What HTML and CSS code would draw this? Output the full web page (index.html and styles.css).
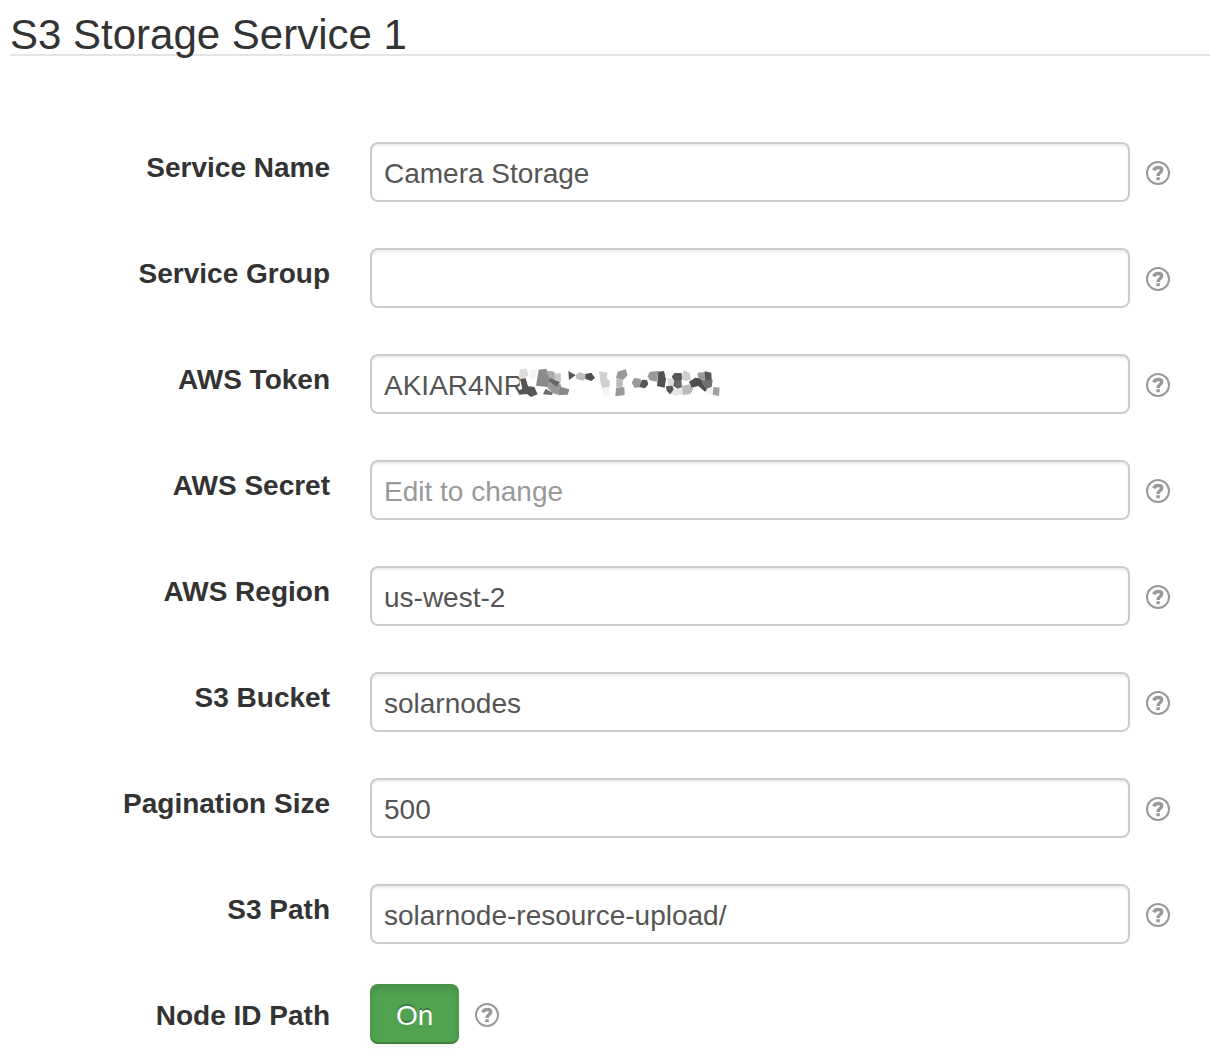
FILE: index.html
```html
<!DOCTYPE html>
<html lang="en">
<head>
<meta charset="utf-8">
<meta name="viewport" content="width=device-width, initial-scale=1">
<title>S3 Storage Service 1</title>
<link rel="stylesheet" href="styles.css">
</head>
<body>
<svg class="sprite" aria-hidden="true">
  <symbol id="help" viewBox="0 0 24 24">
    <circle cx="12" cy="12" r="11" fill="none" stroke="currentColor" stroke-width="2"/>
    <path d="M7.8 9.4C8.5 7.3 10 6.5 12.2 6.5C14.5 6.5 15.7 7.4 15.7 9C15.7 11.6 12.1 11.6 12.1 15" fill="none" stroke="currentColor" stroke-width="3.4"/>
    <path d="M10.3 16.2h3.5v3h-3.5z" fill="currentColor"/>
  </symbol>
</svg>
<form class="settings">
  <h1 class="title">S3 Storage Service 1</h1>
  <div class="row">
    <label class="label" for="name">Service Name</label>
    <div class="controls"><div class="field"><input class="input" id="name" type="text" value="Camera Storage"></div><button class="help" type="button" aria-label="Help"><svg class="icon"><use href="#help"/></svg></button></div>
  </div>
  <div class="row">
    <label class="label" for="group">Service Group</label>
    <div class="controls"><div class="field"><input class="input" id="group" type="text"></div><button class="help" type="button" aria-label="Help"><svg class="icon"><use href="#help"/></svg></button></div>
  </div>
  <div class="row">
    <label class="label" for="token">AWS Token</label>
    <div class="controls">
      <div class="field">
        <input class="input" id="token" type="text" value="AKIAR4NR">
        <svg class="mask" viewBox="0 0 630 135" aria-hidden="true">
          <path fill="#fff" d="M29 26h24v80h-24z"/>
          <path fill="#ddd" d="M30 28l20-2 5 20-14 12-15-5z"/>
          <path fill="#f4f4f4" d="M58 30l24-2-3 25-20 3z"/>
          <path fill="#555" d="M30 57l17-2 7 24 19 2 10 22-20 8-12-9-23 2-3-12 12-6z"/>
          <path fill="#8a8a8a" d="M86 29l23-3 12 32-8 23-35-4z"/>
          <path fill="#aaa" d="M108 32l22 2 8 9-4 20-15-7z"/>
          <path fill="#c6c6c6" d="M132 42l20-3 1 28-16-4z"/>
          <path fill="#999" d="M116 65l25 13 10-8 3 12-6 24-20-7-16-16z"/>
          <path fill="#666" d="M120 54l30 13-9 13-24-15z"/>
          <path fill="#6d6d6d" d="M107 86l22 13-4 6-26-2z"/>
          <path fill="#888" d="M151 80l27 8-5 16-26 1z"/>
          <path fill="#555" d="M175 33l22 13-20 14z"/>
          <path fill="#bbb" d="M197 45l12-8 15 5 2 13-8 7-19-6z"/>
          <path fill="#4d4d4d" d="M226 42l18-4 11 16-11 9-18-6z"/>
          <path fill="#d0d0d0" d="M267 34l26 4-3 17 10 8-1 18-22 3-5-15z"/>
          <path fill="#f3f3f3" d="M275 84l22-3 2 26-17 3z"/>
          <path fill="#999" d="M323 35l24-7 6 18-14 14-21-6z"/>
          <path fill="#bbb" d="M319 55l20 4-2 24-18-2z"/>
          <path fill="#999" d="M318 83l25-2 1 24-28 4z"/>
          <path fill="#999" d="M373 54l17 2 7 11-8 14-15 3-9-16z"/>
          <path fill="#555" d="M396 59l15 1 4 13-10 12-17-4z"/>
          <path fill="#999" d="M419 35l27-2-6 32-21-4-6-12z"/>
          <path fill="#505050" d="M445 35l17-2 6 22-4 28-23-5z"/>
          <path fill="#f1f1f1" d="M469 29l15 17-19 7z"/>
          <path fill="#ccc" d="M522 31l17 8 4 20-16 4-14-6z"/>
          <path fill="#ddd" d="M472 53l21 4 3 22-22-1z"/>
          <path fill="#555" d="M493 39l22 0 1 20-23 3-8-12z"/>
          <path fill="#666" d="M493 60l21 0 2 21-12 7-14-10z"/>
          <path fill="#555" d="M468 79l19-2 6 15-13 11-10-11z"/>
          <path fill="#e5e5e5" d="M494 84l21 2 5 16-25 5-12-8z"/>
          <path fill="#bbb" d="M515 78l22-5 13 14-9 15-22 3z"/>
          <path fill="#4e4e4e" d="M537 65l19-12 21 3 2 17 15 13-9 9-20-17-20 5z"/>
          <path fill="#999" d="M563 38l24-2 2 22-14 3-12-11z"/>
          <path fill="#555" d="M584 34l20 4 1 22-19 2z"/>
          <path fill="#707070" d="M579 60l29-1-3 22-17 7-10-15z"/>
          <path fill="#f2f2f2" d="M590 86l16-4 2 24-18-3z"/>
          <path fill="#a0a0a0" d="M610 81l19 2-2 25-19-4z"/>
        </svg>
      </div><button class="help" type="button" aria-label="Help"><svg class="icon"><use href="#help"/></svg></button>
    </div>
  </div>
  <div class="row">
    <label class="label" for="secret">AWS Secret</label>
    <div class="controls"><div class="field"><input class="input" id="secret" type="password" placeholder="Edit to change"></div><button class="help" type="button" aria-label="Help"><svg class="icon"><use href="#help"/></svg></button></div>
  </div>
  <div class="row">
    <label class="label" for="region">AWS Region</label>
    <div class="controls"><div class="field"><input class="input" id="region" type="text" value="us-west-2"></div><button class="help" type="button" aria-label="Help"><svg class="icon"><use href="#help"/></svg></button></div>
  </div>
  <div class="row">
    <label class="label" for="bucket">S3 Bucket</label>
    <div class="controls"><div class="field"><input class="input" id="bucket" type="text" value="solarnodes"></div><button class="help" type="button" aria-label="Help"><svg class="icon"><use href="#help"/></svg></button></div>
  </div>
  <div class="row">
    <label class="label" for="pagination">Pagination Size</label>
    <div class="controls"><div class="field"><input class="input" id="pagination" type="text" value="500"></div><button class="help" type="button" aria-label="Help"><svg class="icon"><use href="#help"/></svg></button></div>
  </div>
  <div class="row">
    <label class="label" for="path">S3 Path</label>
    <div class="controls"><div class="field"><input class="input" id="path" type="text" value="solarnode-resource-upload/"></div><button class="help" type="button" aria-label="Help"><svg class="icon"><use href="#help"/></svg></button></div>
  </div>
  <div class="row">
    <label class="label" for="nodeid">Node ID Path</label>
    <div class="controls controls-toggle"><button class="toggle" id="nodeid" type="button" aria-pressed="true">On</button><button class="help" type="button" aria-label="Help"><svg class="icon"><use href="#help"/></svg></button></div>
  </div>
</form>
</body>
</html>
```
FILE: styles.css
```css
* {
  box-sizing: border-box;
}

body {
  margin: 0;
  background: #fff;
  color: #333;
  font-family: "Liberation Sans", Arial, sans-serif;
  font-size: 28px;
  line-height: 40px;
}

.sprite {
  display: none;
}

.settings {
  display: flex;
  flex-direction: column;
  gap: 40px;
  padding: 16px 0;
  padding-left: 10px;
}

.title {
  margin: 0 0 40px;
  border-bottom: 2px solid #e5e5e5;
  font-size: 42px;
  font-weight: 400;
  line-height: 38px;
}

.row {
  display: grid;
  grid-template-columns: 320px 1fr;
  column-gap: 40px;
}

.label {
  padding-top: 12px;
  font-weight: 700;
  text-align: right;
}

.controls {
  display: flex;
  align-items: center;
  gap: 16px;
  padding: 6px 40px 0 0;
}

.controls-toggle {
  padding-top: 0;
}

.field {
  position: relative;
  flex: 1;
  min-width: 0;
}

.input {
  display: block;
  width: 100%;
  height: 60px;
  padding: 4px 12px 0;
  border: 2px solid #ccc;
  border-radius: 8px;
  background: #fff;
  box-shadow: inset 0 2px 2px rgba(0, 0, 0, 0.075);
  color: #555;
  font: inherit;
}

.input::placeholder {
  color: #999;
  opacity: 1;
}

.mask {
  position: absolute;
  top: 6px;
  left: 140px;
  width: 210px;
  height: 45px;
}

.help {
  display: flex;
  padding: 2px 0 0;
  border: 0;
  background: none;
  color: #999;
}

.icon {
  width: 24px;
  height: 24px;
}

.toggle {
  height: 60px;
  padding: 3px 26px 0;
  border: 0;
  border-radius: 8px;
  background: #51a351;
  box-shadow: inset 0 -2px 0 rgba(0, 0, 0, 0.2), inset 0 4px 8px rgba(0, 0, 0, 0.15), 0 2px 4px rgba(0, 0, 0, 0.05);
  color: #fff;
  font: inherit;
  text-shadow: 0 -2px 0 rgba(0, 0, 0, 0.25);
}
```
